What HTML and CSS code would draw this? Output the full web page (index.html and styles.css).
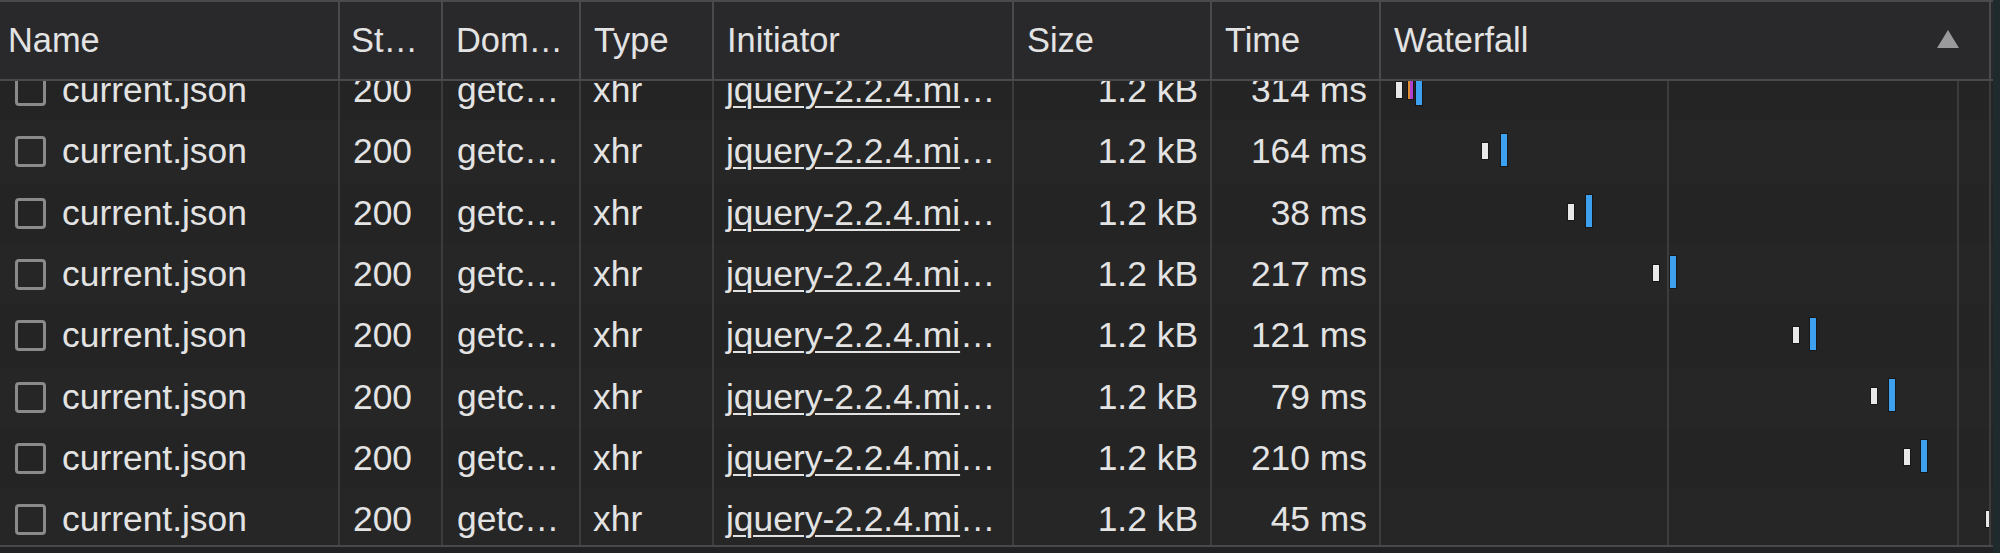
FILE: index.html
```html
<!DOCTYPE html>
<html>
<head>
<meta charset="utf-8">
<link rel="stylesheet" href="styles.css">
</head>
<body>
<div class="net">
  <div class="thead">
    <div class="th c-name">Name</div>
    <div class="th c-status">St…</div>
    <div class="th c-domain">Dom…</div>
    <div class="th c-type">Type</div>
    <div class="th c-init">Initiator</div>
    <div class="th c-size">Size</div>
    <div class="th c-time">Time</div>
    <div class="th c-wf"><span>Waterfall</span><span class="sort"></span></div>
  </div>
  <div class="tbody">
    <div class="rows">
      <div class="tr">
        <div class="td c-name"><span class="cb"></span>current.json</div>
        <div class="td c-status">200</div>
        <div class="td c-domain">getc…</div>
        <div class="td c-type">xhr</div>
        <div class="td c-init"><span class="link">jquery-2.2.4.mi</span>…</div>
        <div class="td c-size">1.2 kB</div>
        <div class="td c-time">314 ms</div>
        <div class="td c-wf">
          <span class="bar wait" style="left:15px"></span>
          <span class="bar stall" style="left:27px"></span>
          <span class="bar recv" style="left:35px"></span>
        </div>
      </div>
      <div class="tr">
        <div class="td c-name"><span class="cb"></span>current.json</div>
        <div class="td c-status">200</div>
        <div class="td c-domain">getc…</div>
        <div class="td c-type">xhr</div>
        <div class="td c-init"><span class="link">jquery-2.2.4.mi</span>…</div>
        <div class="td c-size">1.2 kB</div>
        <div class="td c-time">164 ms</div>
        <div class="td c-wf">
          <span class="bar wait" style="left:101px"></span>
          <span class="bar recv" style="left:120px"></span>
        </div>
      </div>
      <div class="tr">
        <div class="td c-name"><span class="cb"></span>current.json</div>
        <div class="td c-status">200</div>
        <div class="td c-domain">getc…</div>
        <div class="td c-type">xhr</div>
        <div class="td c-init"><span class="link">jquery-2.2.4.mi</span>…</div>
        <div class="td c-size">1.2 kB</div>
        <div class="td c-time">38 ms</div>
        <div class="td c-wf">
          <span class="bar wait" style="left:187px"></span>
          <span class="bar recv" style="left:205px"></span>
        </div>
      </div>
      <div class="tr">
        <div class="td c-name"><span class="cb"></span>current.json</div>
        <div class="td c-status">200</div>
        <div class="td c-domain">getc…</div>
        <div class="td c-type">xhr</div>
        <div class="td c-init"><span class="link">jquery-2.2.4.mi</span>…</div>
        <div class="td c-size">1.2 kB</div>
        <div class="td c-time">217 ms</div>
        <div class="td c-wf">
          <span class="bar wait" style="left:272px"></span>
          <span class="bar recv" style="left:289px"></span>
        </div>
      </div>
      <div class="tr">
        <div class="td c-name"><span class="cb"></span>current.json</div>
        <div class="td c-status">200</div>
        <div class="td c-domain">getc…</div>
        <div class="td c-type">xhr</div>
        <div class="td c-init"><span class="link">jquery-2.2.4.mi</span>…</div>
        <div class="td c-size">1.2 kB</div>
        <div class="td c-time">121 ms</div>
        <div class="td c-wf">
          <span class="bar wait" style="left:412px"></span>
          <span class="bar recv" style="left:429px"></span>
        </div>
      </div>
      <div class="tr">
        <div class="td c-name"><span class="cb"></span>current.json</div>
        <div class="td c-status">200</div>
        <div class="td c-domain">getc…</div>
        <div class="td c-type">xhr</div>
        <div class="td c-init"><span class="link">jquery-2.2.4.mi</span>…</div>
        <div class="td c-size">1.2 kB</div>
        <div class="td c-time">79 ms</div>
        <div class="td c-wf">
          <span class="bar wait" style="left:490px"></span>
          <span class="bar recv" style="left:508px"></span>
        </div>
      </div>
      <div class="tr">
        <div class="td c-name"><span class="cb"></span>current.json</div>
        <div class="td c-status">200</div>
        <div class="td c-domain">getc…</div>
        <div class="td c-type">xhr</div>
        <div class="td c-init"><span class="link">jquery-2.2.4.mi</span>…</div>
        <div class="td c-size">1.2 kB</div>
        <div class="td c-time">210 ms</div>
        <div class="td c-wf">
          <span class="bar wait" style="left:523px"></span>
          <span class="bar recv" style="left:540px"></span>
        </div>
      </div>
      <div class="tr">
        <div class="td c-name"><span class="cb"></span>current.json</div>
        <div class="td c-status">200</div>
        <div class="td c-domain">getc…</div>
        <div class="td c-type">xhr</div>
        <div class="td c-init"><span class="link">jquery-2.2.4.mi</span>…</div>
        <div class="td c-size">1.2 kB</div>
        <div class="td c-time">45 ms</div>
        <div class="td c-wf">
          <span class="bar wait" style="left:605px"></span>
        </div>
      </div>
    </div>
    <div class="gridline g1"></div>
    <div class="gridline g2"></div>
  </div>
</div>
</body>
</html>
```

FILE: styles.css
```css
* { box-sizing: border-box; }
html, body {
  margin: 0;
  padding: 0;
  background: #1f2a2c;
}
body {
  width: 2000px;
  height: 553px;
  overflow: hidden;
  font-family: "Liberation Sans", Arial, sans-serif;
  font-size: 34px;
  color: #e3e3e3;
}
.net {
  width: 1993px;
  height: 553px;
  background: #222224;
  display: flex;
  flex-direction: column;
}
.thead, .tr {
  display: grid;
  grid-template-columns: 340px 103px 138px 133px 300px 198px 169px 610px;
}
.thead {
  height: 81px;
  background: #29292c;
  border-top: 2px solid #4a4a4d;
  border-bottom: 2px solid #4a4a4d;
  font-size: 34.4px;
}
.th {
  display: flex;
  align-items: center;
  padding: 0 12px 0 13px;
  border-right: 2px solid #4a4a4d;
  white-space: nowrap;
  overflow: hidden;
}
.th.c-name { padding-left: 8px; }
.th.c-status { padding-left: 11px; }
.th.c-wf {
  justify-content: space-between;
  padding-right: 30px;
}
.sort {
  width: 0;
  height: 0;
  border-left: 11.5px solid transparent;
  border-right: 11.5px solid transparent;
  border-bottom: 18px solid #9a9a9c;
  margin-top: -4px;
}
.tbody {
  position: relative;
  height: 466px;
  overflow: hidden;
  border-bottom: 2px solid #48484a;
  background: #242424;
  font-size: 35.4px;
}
.rows {
  margin-top: -21px;
}
.tr {
  height: 61.33px;
  background: #242424;
}
.tr:nth-child(even) {
  background: #262626;
}
.td {
  display: flex;
  align-items: center;
  padding: 0 12px 0 13px;
  border-right: 2px solid #3c3c3c;
  white-space: nowrap;
  overflow: hidden;
}
.td.c-name { padding-left: 15px; }
.td.c-domain { padding-left: 14px; }
.td.c-type { padding-left: 12px; }
.td.c-init { padding-left: 12px; }
.td.c-size { justify-content: flex-end; padding-right: 12px; }
.td.c-time { justify-content: flex-end; padding-right: 12px; }
.td.c-wf {
  position: relative;
  border-right: 2px solid #3c3c3c;
}
.cb {
  flex: none;
  width: 31px;
  height: 31px;
  border: 3px solid #8a8a8a;
  border-radius: 4px;
  margin-right: 16px;
}
.link {
  text-decoration: underline;
  text-decoration-thickness: 2px;
  text-underline-offset: 4px;
}
.bar {
  position: absolute;
  width: 6px;
  box-shadow: 0 0 0 1px rgba(0,0,0,0.35);
}
.bar.wait {
  top: 21.5px;
  height: 16px;
  background: #e8e8e8;
}
.bar.recv {
  top: 12.5px;
  height: 32px;
  background: #3ea1f0;
}
.bar.stall {
  top: 12.5px;
  height: 26px;
  width: 5px;
  background: linear-gradient(to right, #e09030 0 2px, #b040d0 2px 5px);
}
.gridline {
  position: absolute;
  top: 0;
  bottom: 0;
  width: 2px;
  background: #3c3c3c;
}
.g1 { left: 1667px; }
.g2 { left: 1957px; }
```
